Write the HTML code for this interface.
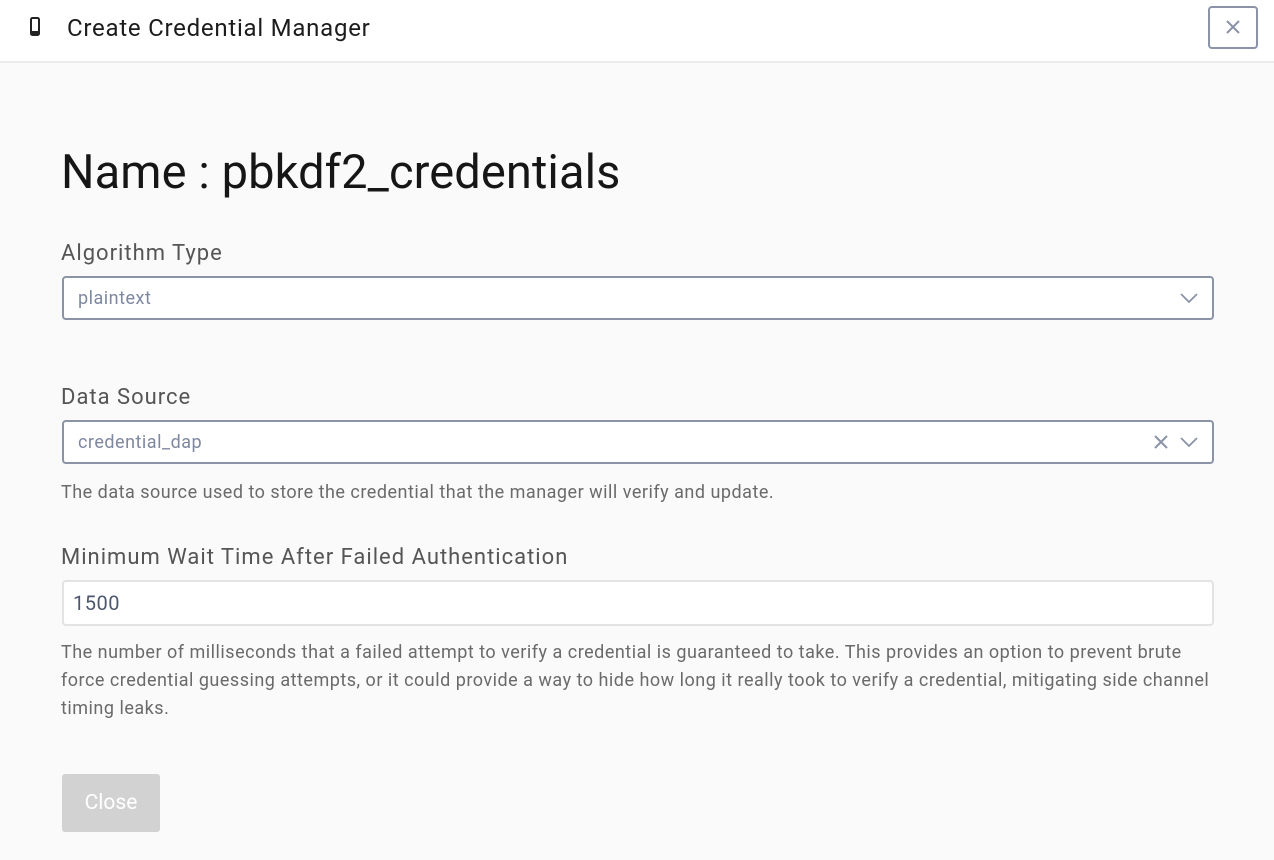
<!DOCTYPE html>
<html><head><style>
*{box-sizing:border-box;margin:0;padding:0}
body{width:1274px;height:860px;background:#fafafa;font-family:"Roboto","Liberation Sans",sans-serif;position:relative;overflow:hidden;color:#222}
.hdr{position:absolute;left:0;top:0;width:1274px;height:63px;background:#fff;border-bottom:2px solid #ececec}
.hdr .t{position:absolute;left:67px;top:14px;font-size:24px;color:#1c1c1c;letter-spacing:.75px}
.xbtn{position:absolute;left:1208px;top:6px;width:50px;height:43px;border:2px solid #8a93a8;border-radius:4px}
.abs{position:absolute}
h1{position:absolute;left:61px;top:145px;font-size:47px;font-weight:400;color:#161616;letter-spacing:.1px}
.lbl{position:absolute;left:61px;font-size:22px;color:#555;letter-spacing:1px}
.sel{position:absolute;left:62px;width:1152px;height:44px;background:#fff;border:2px solid #8a93a8;border-radius:4px;font-size:18px;color:#7e88a0;padding:10px 0 0 14px;letter-spacing:.5px}
.help{position:absolute;left:61px;font-size:18px;color:#6a6a6a;line-height:28px;width:1160px;letter-spacing:.5px}
.inp{position:absolute;left:62px;top:580px;width:1152px;height:46px;background:#fff;border:2px solid #e3e3e3;border-radius:4px;font-size:20px;color:#4c566e;padding:9px 0 0 9px;letter-spacing:.5px}
.btn{position:absolute;left:62px;top:774px;width:98px;height:58px;background:#d2d2d2;border-radius:3px;color:#fff;font-size:21px;text-align:center;line-height:58px}
</style></head><body>
<div class="hdr">
<svg class="abs" style="left:30px;top:17px" width="10" height="20" viewBox="0 0 10 20"><rect x="1" y="1" width="8" height="17" rx="1.5" fill="none" stroke="#222" stroke-width="2"/><rect x="1" y="14" width="8" height="4" fill="#222"/></svg>
<div class="t">Create Credential Manager</div>
<div class="xbtn"><svg class="abs" style="left:15px;top:11px" width="16" height="16" viewBox="0 0 16 16"><path d="M2 2L14 14M14 2L2 14" stroke="#8a93a8" stroke-width="2"/></svg></div>
</div>
<h1>Name : pbkdf2_credentials</h1>
<div class="lbl" style="top:241px">Algorithm Type</div>
<div class="sel" style="top:276px">plaintext<svg class="abs" style="left:1116px;top:14px" width="18" height="12" viewBox="0 0 18 12"><path d="M1 2L9 10L17 2" fill="none" stroke="#8a93a8" stroke-width="1.8"/></svg></div>
<div class="lbl" style="top:385px">Data Source</div>
<div class="sel" style="top:420px">credential_dap<svg class="abs" style="left:1089px;top:12px" width="16" height="16" viewBox="0 0 16 16"><path d="M2 2L14 14M14 2L2 14" stroke="#8a93a8" stroke-width="2"/></svg><svg class="abs" style="left:1116px;top:14px" width="18" height="12" viewBox="0 0 18 12"><path d="M1 2L9 10L17 2" fill="none" stroke="#8a93a8" stroke-width="1.8"/></svg></div>
<div class="help" style="top:479px">The data source used to store the credential that the manager will verify and update.</div>
<div class="lbl" style="top:545px">Minimum Wait Time After Failed Authentication</div>
<div class="inp">1500</div>
<div class="help" style="top:639px">The number of milliseconds that a failed attempt to verify a credential is guaranteed to take. This provides an option to prevent brute force credential guessing attempts, or it could provide a way to hide how long it really took to verify a credential, mitigating side channel timing leaks.</div>
<div class="btn">Close</div>
</body></html>
